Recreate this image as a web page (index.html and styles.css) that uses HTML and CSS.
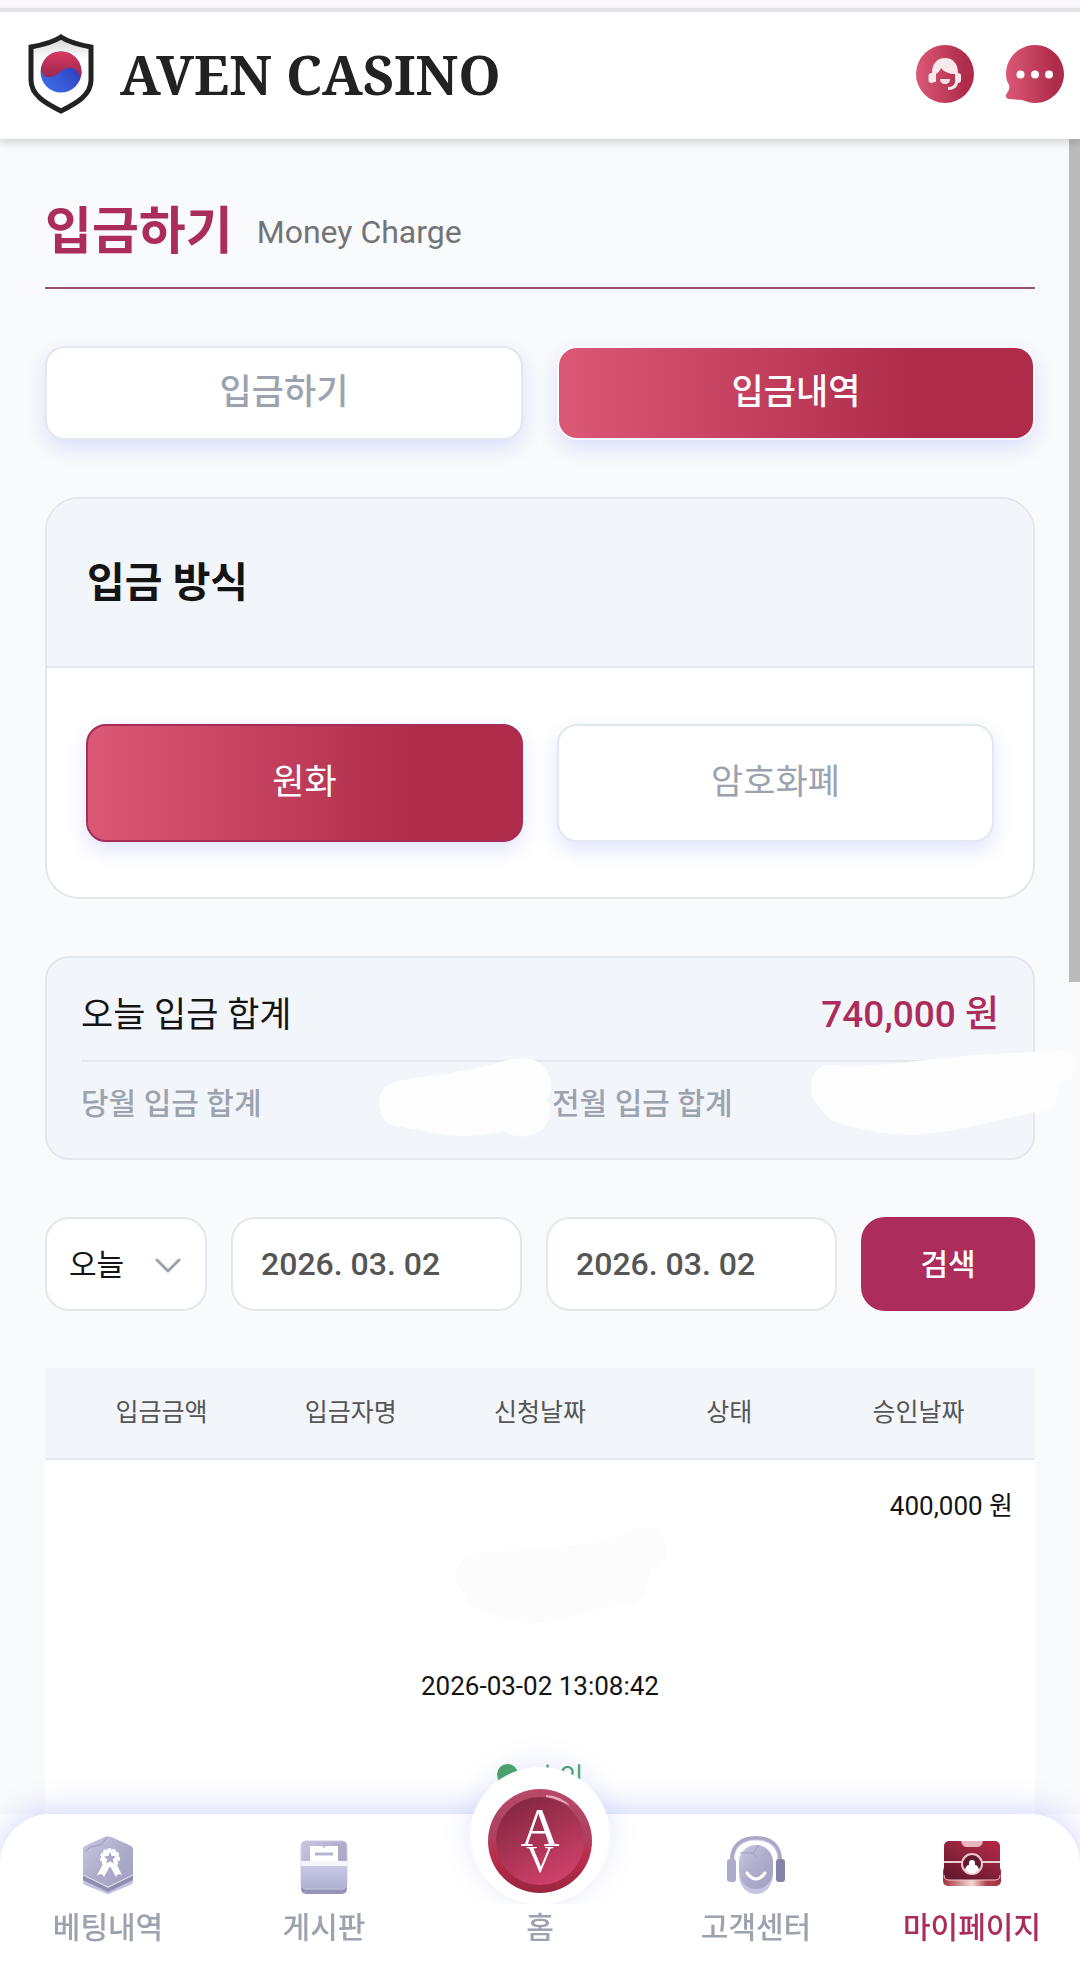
FILE: index.html
```html
<!DOCTYPE html>
<html lang="ko">
<head>
<meta charset="utf-8">
<meta name="viewport" content="width=device-width, initial-scale=1">
<title>AVEN CASINO</title>
<link rel="stylesheet" href="styles.css">
</head>
<body>
<div class="app">
  <header class="header">
    <a class="brand" href="#">
      <svg class="brand-mark" viewBox="0 0 66 80" aria-hidden="true">
        <defs>
          <linearGradient id="sh" x1="0" y1="0" x2="0" y2="1"><stop offset="0" stop-color="#d2d2d2"/><stop offset=".3" stop-color="#fff"/></linearGradient>
          <linearGradient id="rd" x1="0" y1="0" x2="0" y2="1"><stop offset="0" stop-color="#d93a62"/><stop offset="1" stop-color="#9c2550"/></linearGradient>
          <linearGradient id="bl" x1="0" y1="1" x2="1" y2="0"><stop offset="0" stop-color="#3f74ee"/><stop offset="1" stop-color="#2a2fae"/></linearGradient>
        </defs>
        <path d="M33 3C42 9 52 11 63 13V46C63 61 49 69 33 77C17 69 3 61 3 46V13C14 11 24 9 33 3Z" fill="url(#sh)" stroke="#222" stroke-width="5"/>
        <circle cx="33" cy="38" r="20.500" fill="url(#bl)"/>
        <path d="M13.500 33C16 23 23 17.500 33 17.500C46 17.500 54 28 53.500 39C53 44 52 44 51 41C48 33 41 32 35 36C29 40 25 44 19 43C15 42 13 38 13.500 33Z" fill="url(#rd)"/>
      </svg>
      <span class="brand-name">AVEN CASINO</span>
    </a>
    <div class="header-actions">
      <button class="icon-button" type="button" aria-label="고객센터">
        <svg viewBox="0 0 58 58" aria-hidden="true">
          <defs><linearGradient id="g1"><stop offset="0" stop-color="#dc5877"/><stop offset=".85" stop-color="#ae2b4a"/></linearGradient></defs>
          <circle cx="29" cy="29" r="29" fill="url(#g1)"/>
          <path d="M16 37V28C16 19 21 13 29 13C37 13 42 19 42 28V37C42 42 38 45 32 45V42C36 42 39 40 39 36V29C34 29 28 27 25 23C24 26 22 28 20 29V37Z" fill="#f5e9eb"/>
          <rect x="12.500" y="28" width="6" height="10" rx="3" fill="#f5e9eb"/><rect x="39" y="28" width="6" height="10" rx="3" fill="#f5e9eb"/>
          <path d="M24 34H34C34 37 32 39 29 39C26 39 24 37 24 34Z" fill="#f5dfe4"/>
        </svg>
      </button>
      <button class="icon-button" type="button" aria-label="채팅">
        <svg viewBox="0 0 58 58" aria-hidden="true">
          <path d="M29 0C45 0 58 13 58 29C58 45 45 58 29 58C24 58 20 56 16 55L3 54C0 54-1 51 1 48C3 45 4 43 3 40C1 37 0 33 0 29C0 13 13 0 29 0Z" fill="url(#g1)"/>
          <circle cx="14.500" cy="29.500" r="4" fill="#fff"/><circle cx="29" cy="29.500" r="4" fill="#fff"/><circle cx="43" cy="29.500" r="4" fill="#fff"/>
        </svg>
      </button>
    </div>
  </header>

  <div class="scroll-thumb"></div>
  <main class="main">
    <div class="page-title">
      <h1>입금하기</h1>
      <span>Money Charge</span>
    </div>

    <div class="tabs">
      <button class="tab" type="button">입금하기</button>
      <button class="tab tab-active" type="button">입금내역</button>
    </div>

    <section class="panel">
      <h2 class="panel-head">입금 방식</h2>
      <div class="panel-body">
        <button class="method method-active" type="button">원화</button>
        <button class="method" type="button">암호화폐</button>
      </div>
    </section>

    <section class="summary">
      <div class="summary-today">
        <span>오늘 입금 합계</span>
        <strong>740,000 원</strong>
      </div>
      <div class="summary-months">
        <div class="month">당월 입금 합계
          <svg class="cover cover-current" viewBox="0 0 172 80" aria-hidden="true"><path d="M0 44C0 32 8 25 19 23C50 17 90 14 125 3C140-2 158 0 166 9C173 18 174 34 168 42C174 52 170 66 162 72C152 80 138 81 124 73C100 79 75 80 50 74L12 67C4 64 0 54 0 44Z" fill="#fdfdfe"/></svg>
        </div>
        <div class="month">전월 입금 합계
          <svg class="cover cover-previous" viewBox="0 0 266 84" aria-hidden="true"><path d="M0 35C0 22 8 14 18 14C70 18 130 5 178 3L250 0C262-1 268 7 264 19C262 28 255 31 249 32C248 47 243 59 230 61C196 65 150 82 102 84C76 84 45 78 22 70C13 66 10 56 5 52C1 47 0 42 0 35Z" fill="#fdfdfe"/></svg>
        </div>
      </div>
    </section>

    <form class="filters">
      <div class="period">
        <select aria-label="기간"><option>오늘</option></select>
        <svg class="chevron" viewBox="0 0 26 16" aria-hidden="true"><path d="M2 2L13 13L24 2" fill="none" stroke="#9ca3af" stroke-width="3" stroke-linecap="round" stroke-linejoin="round"/></svg>
      </div>
      <input type="text" aria-label="시작일" value="2026. 03. 02">
      <input type="text" aria-label="종료일" value="2026. 03. 02">
      <button type="button">검색</button>
    </form>

    <table class="history">
      <thead>
        <tr><th>입금금액</th><th>입금자명</th><th>신청날짜</th><th>상태</th><th>승인날짜</th></tr>
      </thead>
      <tbody>
        <tr>
          <td class="amount">400,000 원</td>
          <td class="depositor"><svg class="cover-name" viewBox="0 0 212 96" aria-hidden="true"><path d="M0 50C0 35 10 28 24 26C60 22 115 20 145 14C165 10 178 0 190 0C204 0 211 10 211 22C211 34 203 39 194 41C192 56 190 76 172 77C140 80 110 96 83 96C60 96 30 89 14 78C10 74 10 70 9 66C4 63 0 58 0 50Z" fill="#fcfcfd"/></svg></td>
          <td>2026-03-02 13:08:42</td>
          <td class="status"><i class="dot"></i>승인</td>
        </tr>
      </tbody>
    </table>
  </main>

  <nav class="nav">
    <a href="#">
      <svg viewBox="0 0 58 58" aria-hidden="true">
        <defs>
          <linearGradient id="lv" x1="0" y1="0" x2="1" y2="1"><stop offset="0" stop-color="#c9c8e3"/><stop offset=".5" stop-color="#aeadcb"/><stop offset="1" stop-color="#a09fc2"/></linearGradient>
          <linearGradient id="lv2" x1="0" y1="0" x2="0" y2="1"><stop offset="0" stop-color="#c9c9e6"/><stop offset="1" stop-color="#b0b0d2"/></linearGradient>
        </defs>
        <path d="M26 1Q29 0 32 1L52 10Q54 11 54 14V45Q54 48 51 49L32 57Q29 59 26 57L6 49Q4 48 4 45V14Q4 11 6 10Z" fill="#c2c1df"/>
        <path d="M4 39L29 52L54 39V44L29 56L4 44Z" fill="#8f8eb1"/>
        <path d="M26 1Q29 0 32 1L52 10Q54 11 54 14V39L29 51L4 39V14Q4 11 6 10Z" fill="url(#lv)"/>
        <path d="M4 39L29 51L54 39" fill="none" stroke="#e3e3f2" stroke-width="1"/>
        <path d="M28 1L22 9L11 11L6 16" fill="none" stroke="#9997b7" stroke-width="1"/>
        <path d="M24 28L18 39L23 38L25 41L31 30L37 41L39 38L43 39L37 27Z" fill="#fff"/>
        <circle cx="31" cy="22" r="9" fill="#fff" stroke="#fff" stroke-width="2" stroke-dasharray="3 2"/>
        <path d="M31 16L32.700 20L37 20.400L33.800 23.200L34.700 27.500L31 25.200L27.300 27.500L28.200 23.200L25 20.400L29.300 20Z" fill="#aaa9c7"/>
      </svg>
      <span>베팅내역</span>
    </a>
    <a href="#">
      <svg viewBox="0 0 58 58" aria-hidden="true">
        <rect x="6" y="5" width="46" height="53" rx="5" fill="#9594b8"/>
        <rect x="6" y="5" width="46" height="48" rx="5" fill="url(#lv)" stroke="#cdcce5" stroke-width="1"/>
        <path d="M15 10H27L29 12L31 10H43V27H15Z" fill="#fff"/>
        <path d="M20 18H38" stroke="#b5b4d2" stroke-width="3"/>
        <path d="M6 25H52V31H6Z" fill="#f5f5fc"/>
        <path d="M6 30H52V48Q52 52 48 52H10Q6 52 6 48Z" fill="url(#lv2)"/>
      </svg>
      <span>게시판</span>
    </a>
    <a class="nav-home" href="#">
      <span class="home-disc">
        <svg viewBox="0 0 104 104" aria-hidden="true">
          <defs>
            <linearGradient id="rim" x1="0" y1="0" x2="0" y2="1"><stop offset="0" stop-color="#b84a68"/><stop offset=".45" stop-color="#ae4161"/><stop offset=".65" stop-color="#bc2c4b"/><stop offset="1" stop-color="#98263f"/></linearGradient>
            <linearGradient id="coin" x1=".2" y1="0" x2=".7" y2="1"><stop offset="0" stop-color="#812641"/><stop offset=".5" stop-color="#a93354"/><stop offset="1" stop-color="#d1426c"/></linearGradient>
          </defs>
          <circle cx="52" cy="52" r="52" fill="url(#rim)"/>
          <circle cx="52" cy="52" r="44" fill="url(#coin)"/>
          <path d="M58 6Q74 7 82 17Q70 10 58 8Z" fill="#e5a9b8"/>
          <text x="52" y="57" text-anchor="middle" font-size="54">A</text>
          <text x="52" y="83" text-anchor="middle" font-size="38">V</text>
        </svg>
      </span>
      <span>홈</span>
    </a>
    <a href="#">
      <svg viewBox="0 0 58 58" aria-hidden="true">
        <path d="M5 24C5 10 14 2 29 2C44 2 53 10 53 24" fill="none" stroke="#a9a8c6" stroke-width="4"/>
        <path d="M7 24C7 12 15 4 29 4C43 4 51 12 51 24" fill="none" stroke="#d5d4e8" stroke-width="1"/>
        <rect x="0" y="23" width="9" height="23" rx="3" fill="#acabc9"/><rect x="49" y="23" width="9" height="23" rx="3" fill="#8583a7"/>
        <path d="M12 40C14 54 22 58 29 58C36 58 44 54 46 40Z" fill="#c6c5e3"/>
        <rect x="12" y="9" width="34" height="44" rx="17" fill="url(#lv)"/>
        <path d="M13 17L26 17L32 9M26 17L29 21" fill="none" stroke="#9c9bbb" stroke-width="1"/>
        <path d="M20 37Q29 49 38 37" fill="none" stroke="#fff" stroke-width="3" stroke-linecap="round"/>
      </svg>
      <span>고객센터</span>
    </a>
    <a class="nav-active" href="#">
      <svg viewBox="0 0 58 58" aria-hidden="true">
        <defs>
          <linearGradient id="bx" x1="1" y1="0" x2=".4" y2="1"><stop offset="0" stop-color="#b52645"/><stop offset=".45" stop-color="#96253f"/><stop offset="1" stop-color="#68192f"/></linearGradient>
          <linearGradient id="bs"><stop offset="0" stop-color="#a42d3d"/><stop offset=".5" stop-color="#f5d9d4"/><stop offset=".75" stop-color="#b34550"/><stop offset="1" stop-color="#a52a3f"/></linearGradient>
        </defs>
        <rect x="0" y="30" width="58" height="20" rx="5" fill="url(#bs)"/>
        <rect x="1" y="5" width="56" height="39" rx="5" fill="url(#bx)"/>
        <path d="M1 39Q1 44 6 44H52Q57 44 57 39" fill="none" stroke="#efc9cd" stroke-width="1"/>
        <path d="M18 5H40Q39 11 34 11H24Q19 11 18 5Z" fill="#e9b5bf"/>
        <path d="M1 26H57" stroke="#eecdd3" stroke-width="2"/>
        <circle cx="29" cy="28" r="10" fill="#611a2e" stroke="#efc6ce" stroke-width="2"/>
        <path d="M22 34Q23 29 26 29V27Q26 24 29 24Q32 24 32 27V29Q35 29 36 34Q29 41 22 34Z" fill="#fff"/>
      </svg>
      <span>마이페이지</span>
    </a>
  </nav>
</div>
</body>
</html>
```
FILE: styles.css
```css
:root {
  --brand: #ac2d5b;
  --line: #e3e7ee;
  --muted: #9ca3af;
  --soft: #f2f5fa;
  --page: #f9fafc;
  --ink: #141414;
  --fill: linear-gradient(90deg, #dc5877 0%, #ae2b4a 76%);
  --lift: 0 8px 20px rgba(99, 120, 240, .2);
}

* { box-sizing: border-box; }

body {
  margin: 0;
  background: #fff;
  color: var(--ink);
  font-family: Roboto, "Noto Sans CJK KR", sans-serif;
}

button, input, select { font: inherit; color: inherit; }
button { cursor: pointer; }
a { color: inherit; text-decoration: none; }
h1, h2 { margin: 0; }

.app {
  position: relative;
  display: flex;
  flex-direction: column;
  height: 100vh;
  border-top: 8px solid #faf8fd;
}

.header {
  position: relative;
  z-index: 3;
  display: flex;
  align-items: center;
  justify-content: space-between;
  height: 131px;
  flex: none;
  padding: 0 16px 4px 28px;
  border-top: 4px solid #e4e3e9;
  background: #fff;
  box-shadow: 0 4px 8px rgba(0, 0, 0, .15);
}

.brand { display: flex; align-items: center; gap: 26px; }
.brand-mark { width: 66px; height: 80px; }
.brand-name {
  color: #222;
  font: 700 54px/64px "Noto Serif", "Liberation Serif", serif;
}

.header-actions { display: flex; gap: 32px; }
.icon-button { width: 58px; height: 58px; padding: 0; border: 0; background: none; }
.icon-button svg { display: block; width: 58px; height: 58px; }

.scroll-thumb {
  position: absolute;
  z-index: 2;
  top: 131px;
  right: 0;
  width: 11px;
  height: 43%;
  background: #bbbbbe;
}

.main {
  display: flex;
  flex: 1;
  flex-direction: column;
  gap: 57px;
  min-height: 0;
  padding: 56px 45px 0;
  overflow: hidden auto;
  scrollbar-width: none;
  background: var(--page);
}
.main > * { flex: none; }

.page-title {
  display: flex;
  align-items: center;
  gap: 24px;
  height: 94px;
  padding-bottom: 19px;
  border-bottom: 2px solid #9c4f6e;
}
.page-title h1 { color: var(--brand); font-size: 51px; font-weight: 700; line-height: 70px; }
.page-title span { color: #737477; font-size: 32px; line-height: 40px; }

.tabs { display: grid; grid-template-columns: 1fr 1fr; gap: 34px; }
.tab, .method {
  border: 2px solid var(--line);
  border-radius: 20px;
  background: #fff;
  box-shadow: var(--lift);
  color: var(--muted);
  font-size: 35px;
  line-height: 50px;
}
.tab { height: 94px; padding: 0; font-weight: 500; }
.tab-active { border-color: transparent; background: var(--fill) padding-box; color: #fff; }

.panel {
  overflow: hidden;
  border: 2px solid var(--line);
  border-radius: 34px;
  background: #fff;
}
.panel-head {
  padding: 56px 40px 54px;
  border-bottom: 2px solid var(--line);
  background: var(--soft);
  font-size: 41px;
  line-height: 57px;
}
.panel-body { display: grid; grid-template-columns: 1fr 1fr; gap: 34px; padding: 56px 39px 55px; }
.method { height: 118px; padding: 0; font-weight: 400; }
.method-active { border-color: #a82c58; background: var(--fill); color: #fff; }

.summary {
  height: 204px;
  padding: 0 34px;
  border: 2px solid var(--line);
  border-radius: 24px;
  background: var(--soft);
}
.summary-today {
  display: flex;
  align-items: center;
  justify-content: space-between;
  height: 104px;
  padding-top: 4px;
  border-bottom: 2px solid var(--line);
  font-size: 35px;
}
.summary-today strong { color: var(--brand); font-size: 37px; font-weight: 500; }
.summary-months {
  display: grid;
  grid-template-columns: 1fr 1fr;
  gap: 24px;
  color: var(--muted);
  font-size: 30px;
  font-weight: 500;
  line-height: 84px;
}
.month { position: relative; }
.cover { position: absolute; top: -4px; left: 298px; width: 172px; height: 80px; }
.cover-previous { top: -11px; left: 259px; width: 266px; height: 84px; }

.filters { display: grid; grid-template-columns: 162fr 291fr 291fr 174fr; gap: 24px; }
.filters input, .filters select, .filters button {
  width: 100%;
  height: 94px;
  border: 2px solid var(--line);
  border-radius: 24px;
  background: #fff;
  font-size: 30px;
}
.filters input { min-width: 0; padding: 0 28px; color: #555; font-size: 32px; font-weight: 500; }
.filters select { padding: 0 22px; appearance: none; }
.filters button { padding: 0 0 4px; border: 0; background: var(--brand); color: #fff; font-weight: 500; }
.period { position: relative; }
.chevron { position: absolute; top: 41px; right: 26px; width: 26px; height: 16px; pointer-events: none; }

.history, .history thead, .history tbody { display: block; width: 100%; }
.history thead { border-bottom: 2px solid var(--line); background: var(--soft); }
.history thead tr { display: grid; grid-template-columns: repeat(5, 1fr); padding: 0 22px; }
.history th { padding: 0; color: #555; font-size: 25px; font-weight: 400; line-height: 90px; }
.history tbody { background: #fff; font-size: 26px; }
.history tbody tr { display: block; padding: 0 22px; }
.history td {
  display: flex;
  align-items: center;
  justify-content: center;
  height: 91px;
  padding: 0 0 4px;
}
.history .amount { justify-content: flex-end; }
.history .depositor { align-items: flex-start; }
.history .status { gap: 18px; padding-bottom: 8px; color: #4ba567; }
.cover-name { flex: none; width: 212px; height: 96px; margin: -24px 0 0 44px; }
.dot { width: 21px; height: 21px; border-radius: 50%; background: #4ba567; }

.nav {
  position: relative;
  display: grid;
  grid-template-columns: repeat(5, 1fr);
  flex: none;
  height: 155px;
  border-radius: 50px 50px 0 0;
  background: #fff;
  box-shadow: 0 -4px 30px rgba(90, 110, 240, .27);
}
.nav a {
  display: flex;
  flex-direction: column;
  align-items: center;
  gap: 10px;
  padding-top: 22px;
  color: var(--muted);
  font-size: 30px;
  font-weight: 500;
  line-height: 48px;
}
.nav a > svg { width: 58px; height: 58px; }
.nav .nav-active { color: var(--brand); }
.nav .nav-home { gap: 0; margin-top: -47px; padding-top: 0; }
.home-disc {
  display: flex;
  align-items: center;
  justify-content: center;
  width: 140px;
  height: 137px;
  border-radius: 50%;
  background: #fff;
  box-shadow: 0 -4px 30px rgba(90, 110, 240, .15);
  clip-path: inset(-40px -40px 0 -40px);
}
.home-disc svg { width: 104px; height: 104px; margin-top: 10px; }
.home-disc text { fill: #fff; font-family: "Liberation Serif", serif; }
```
